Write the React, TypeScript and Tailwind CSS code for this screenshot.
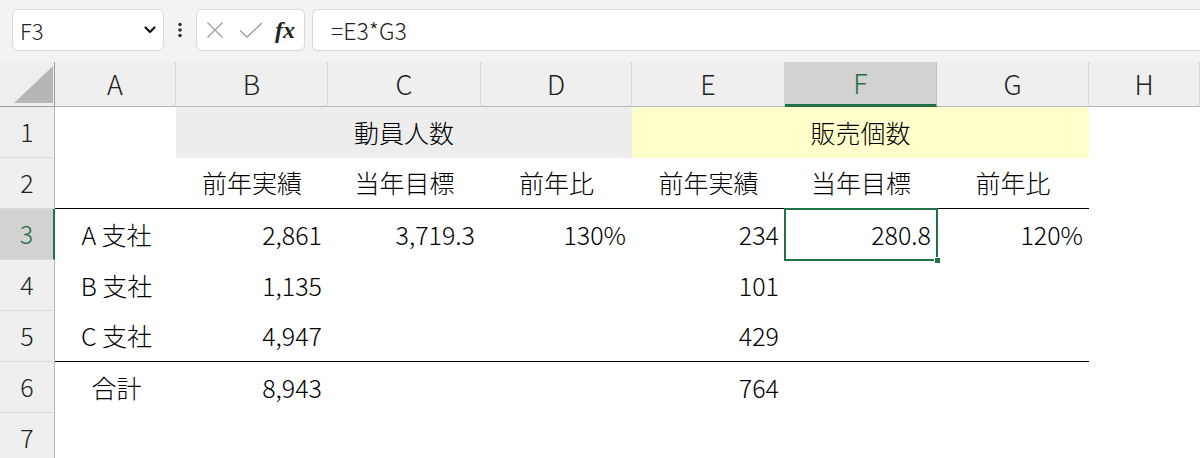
import React from 'react';

const cols = ['A', 'B', 'C', 'D', 'E', 'F', 'G', 'H'];

type Cell = { text?: string; align?: 'left' | 'center' | 'right' };

const body: { row: number; cells: Cell[]; rule?: boolean }[] = [
  {
    row: 3,
    cells: [
      { text: 'A 支社', align: 'center' },
      { text: '2,861', align: 'right' },
      { text: '3,719.3', align: 'right' },
      { text: '130%', align: 'right' },
      { text: '234', align: 'right' },
      { text: '280.8', align: 'right' },
      { text: '120%', align: 'right' },
    ],
  },
  {
    row: 4,
    cells: [
      { text: 'B 支社', align: 'center' },
      { text: '1,135', align: 'right' },
      {},
      {},
      { text: '101', align: 'right' },
      {},
      {},
    ],
  },
  {
    row: 5,
    rule: true,
    cells: [
      { text: 'C 支社', align: 'center' },
      { text: '4,947', align: 'right' },
      {},
      {},
      { text: '429', align: 'right' },
      {},
      {},
    ],
  },
  {
    row: 6,
    cells: [
      { text: '合計', align: 'center' },
      { text: '8,943', align: 'right' },
      {},
      {},
      { text: '764', align: 'right' },
      {},
      {},
    ],
  },
  { row: 7, cells: [{}, {}, {}, {}, {}, {}, {}] },
];

function RowHead({ n }: { n: number }) {
  const active = n === 3;
  return (
    <div
      className={`flex h-[51px] items-center justify-center border-b border-[#d9d9d9] text-[25px] ${
        active
          ? 'border-r-2 border-r-[#217346] bg-[#d2d2d2] text-[#1e6e42]'
          : 'border-r border-r-[#b8b8b8] bg-[#efefef] text-[#222]'
      }`}
    >
      {n}
    </div>
  );
}

export default function App() {
  return (
    <div className="h-[458px] w-[1200px] overflow-hidden bg-white font-[family-name:'Noto_Sans_CJK_JP',sans-serif] font-light text-black">
      {/* formula bar */}
      <div className="flex h-[62px] items-start bg-[#f3f3f3] pl-[12px] pt-[9px]">
        <div className="flex h-[42px] w-[152px] items-center justify-between rounded-md border border-[#d8d8d8] bg-white pl-[7px] pr-[6px] text-[22px] text-[#222]">
          <span>F3</span>
          <svg width="14" height="14" viewBox="0 0 14 14">
            <path d="M2.5 4.5 7 9l4.5-4.5" fill="none" stroke="#111" strokeWidth="2.2" strokeLinecap="round" strokeLinejoin="round" />
          </svg>
        </div>
        <div className="flex h-[42px] w-[32px] items-center justify-center">
          <svg width="6" height="16" viewBox="0 0 6 16">
            <circle cx="3" cy="2.5" r="1.8" fill="#333" />
            <circle cx="3" cy="8" r="1.8" fill="#333" />
            <circle cx="3" cy="13.5" r="1.8" fill="#333" />
          </svg>
        </div>
        <div className="flex h-[42px] w-[109px] items-center rounded-md border border-[#d8d8d8] bg-white pl-[8px]">
          <svg width="18" height="18" viewBox="0 0 18 18" className="ml-[1px]">
            <path d="M1.5 1.5 16.5 16.5M16.5 1.5 1.5 16.5" stroke="#a0a0a0" strokeWidth="1.4" fill="none" />
          </svg>
          <svg width="24" height="16" viewBox="0 0 24 16" className="ml-[15px]">
            <path d="M1 8.5 8 15 23 1" stroke="#a0a0a0" strokeWidth="1.4" fill="none" />
          </svg>
          <span className="ml-[12px] font-[family-name:'Liberation_Serif',serif] text-[24px] font-bold italic leading-none text-[#222]">
            fx
          </span>
        </div>
        <div className="ml-[7px] flex h-[42px] flex-1 items-center rounded-l-md border border-r-0 border-[#d8d8d8] bg-white pl-[18px] text-[23px] text-[#222]">
          =E3*G3
        </div>
      </div>

      {/* sheet */}
      <div className="grid grid-cols-[55px_121px_152px_153px_151px_153px_152px_152px_1fr]">
        {/* column headers */}
        <div className="relative h-[45px] border-b border-r border-[#9e9e9e] bg-[#efefef]">
          <svg width="55" height="45" viewBox="0 0 55 45" className="absolute left-0 top-0">
            <polygon points="14,41 53,41 53,4" fill="#b6b6b6" />
          </svg>
        </div>
        {cols.map((c) => (
          <div
            key={c}
            className={`flex h-[45px] items-center justify-center text-[27px] ${
              c === 'F'
                ? 'border-b-[3px] border-r border-b-[#217346] border-r-[#c4c4c4] bg-[#d2d2d2] text-[#1e6e42]'
                : 'border-b border-r border-b-[#b8b8b8] border-r-[#d6d6d6] bg-[#efefef] text-[#222]'
            }`}
          >
            {c}
          </div>
        ))}

        {/* row 1 */}
        <RowHead n={1} />
        <div className="h-[51px]" />
        <div className="col-span-3 flex h-[51px] items-center justify-center bg-[#ededed] text-[25px]">動員人数</div>
        <div className="col-span-3 flex h-[51px] items-center justify-center bg-[#ffffcc] text-[25px]">販売個数</div>
        <div className="h-[51px]" />

        {/* row 2 */}
        <RowHead n={2} />
        {['', '前年実績', '当年目標', '前年比', '前年実績', '当年目標', '前年比'].map((t, i) => (
          <div key={i} className="flex h-[51px] items-center justify-center border-b border-black text-[25px]">
            {t}
          </div>
        ))}
        <div className="h-[51px]" />

        {/* data rows */}
        {body.map((r) => (
          <React.Fragment key={r.row}>
            <RowHead n={r.row} />
            {r.cells.map((c, i) => {
              const selected = r.row === 3 && i === 5;
              return (
                <div
                  key={i}
                  className={`relative flex h-[51px] items-center px-[6px] text-[25px] ${
                    c.align === 'right' ? 'justify-end' : 'justify-center pl-[8px]'
                  } ${r.rule ? 'border-b border-black' : ''}`}
                >
                  {c.text}
                  {selected && (
                    <>
                      <div className="pointer-events-none absolute -left-[1px] -top-[1px] bottom-[-1px] right-[-1px] border-2 border-[#217346]" />
                      <div className="absolute -bottom-[4px] -right-[4px] h-[7px] w-[7px] border border-white bg-[#217346]" />
                    </>
                  )}
                </div>
              );
            })}
            <div className="h-[51px]" />
          </React.Fragment>
        ))}
      </div>
    </div>
  );
}
